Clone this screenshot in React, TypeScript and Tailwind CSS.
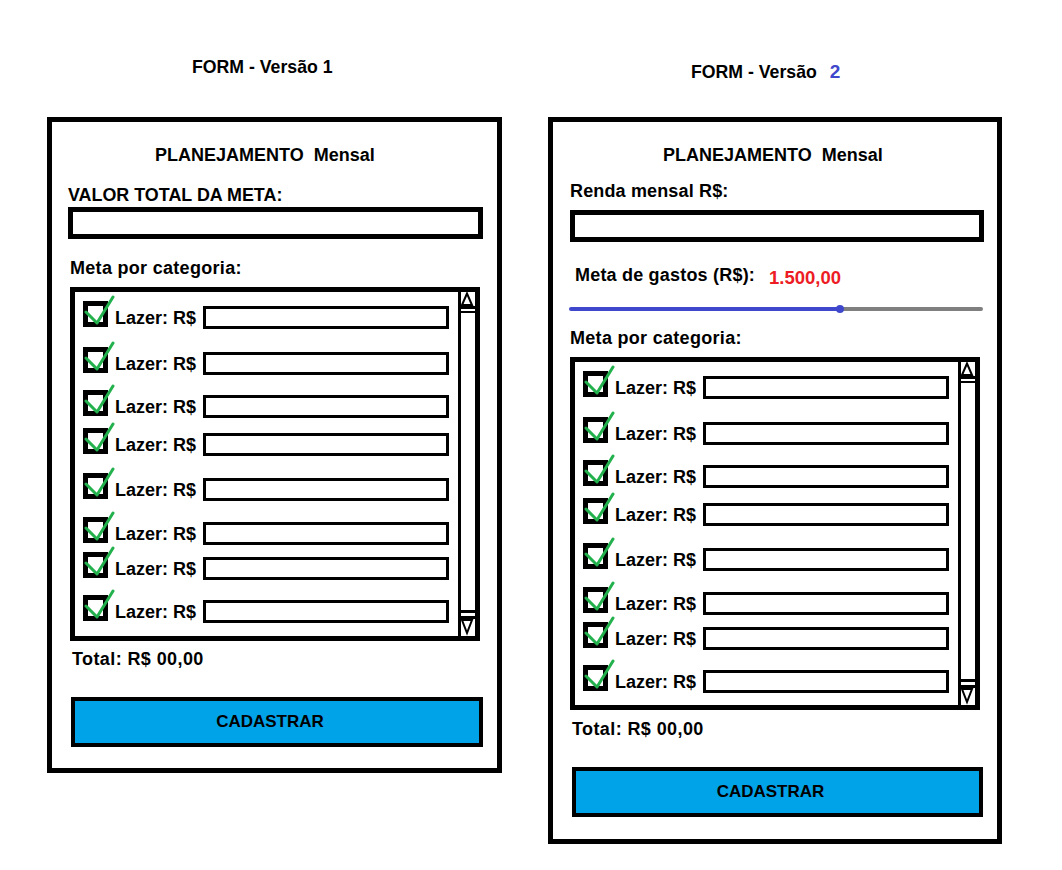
import React from "react";

const rowGaps = ["mt-[9px]", "mt-[18px]", "mt-[15px]", "mt-[10px]", "mt-[17px]", "mt-[16px]", "mt-[7px]", "mt-[15px]"];

const CheckRow = ({ gap }: { gap: string }) => (
  <div className={`flex items-start h-[28px] pl-[8px] ${gap}`}>
    <div className="relative w-[25px] h-[26px] border-[5px] border-black bg-white shrink-0">
      <svg className="absolute left-[-5px] top-[-11px]" width="34" height="32" viewBox="0 0 34 32" fill="none">
        <polyline points="3,17 14,28 30,2" stroke="#22b14c" strokeWidth="3" strokeLinejoin="round" strokeLinecap="round" />
      </svg>
    </div>
    <span className="ml-[7px] mt-[7px] text-[18px] leading-[20px] whitespace-nowrap">Lazer: R$</span>
    <div className="ml-[7px] mt-[5px] w-[246px] h-[23px] border-[3px] border-black bg-white shrink-0" />
  </div>
);

const ScrollBar = () => (
  <div className="w-[17px] border-l-[3px] border-black flex flex-col justify-between">
    <svg width="14" height="21" viewBox="0 0 14 21">
      <polygon points="6,1.5 1,13 11,13" fill="white" stroke="black" strokeWidth="2" />
      <rect x="0" y="14" width="14" height="3" fill="black" />
      <rect x="0" y="19" width="14" height="2" fill="black" />
    </svg>
    <svg width="14" height="26" viewBox="0 0 14 26">
      <rect x="0" y="0" width="14" height="3" fill="black" />
      <rect x="0" y="6" width="14" height="3" fill="black" />
      <polygon points="1,10 11,10 6,23" fill="white" stroke="black" strokeWidth="2" />
    </svg>
  </div>
);

const CategoryList = ({ height }: { height: string }) => (
  <div className={`w-[410px] ${height} border-[5px] border-black flex`}>
    <div className="flex-1 flex flex-col">
      {rowGaps.map((g, i) => (
        <CheckRow key={i} gap={g} />
      ))}
    </div>
    <ScrollBar />
  </div>
);

const CadastrarButton = ({ width }: { width: string }) => (
  <div className={`mt-[28px] ml-[19px] ${width} h-[50px] border-[4px] border-black bg-[#00a2e8] flex items-center justify-center pr-[14px]`}>
    <span className="text-[17px] leading-[20px]">CADASTRAR</span>
  </div>
);

export default function App() {
  return (
    <div className="min-h-screen bg-white text-black font-bold font-['Liberation_Sans',Arial,sans-serif]">
      <div className="flex items-start pl-[47px] pt-[57px] gap-[46px]">
        {/* Versão 1 */}
        <div className="flex flex-col w-[455px]">
          <div className="pl-[145px] text-[17.7px] leading-[20px] whitespace-nowrap">FORM - Versão 1</div>
          <div className="mt-[40px] border-[5px] border-black flex flex-col items-start pt-[23px] pb-[21px]">
            <div className="ml-[103px] text-[18px] leading-[20px] whitespace-pre">PLANEJAMENTO  Mensal</div>
            <div className="ml-[16px] mt-[20px] text-[17.9px] leading-[20px]">VALOR TOTAL DA META:</div>
            <div className="ml-[16px] mt-[2px] w-[415px] h-[32px] border-[5px] border-black" />
            <div className="ml-[18px] mt-[19px] text-[18px] leading-[20px] tracking-[0.3px]">Meta por categoria:</div>
            <div className="ml-[18px] mt-[9px]">
              <CategoryList height="h-[354px]" />
            </div>
            <div className="ml-[20px] mt-[8px] text-[18px] leading-[20px] tracking-[0.4px]">Total: R$ 00,00</div>
            <CadastrarButton width="w-[412px]" />
          </div>
        </div>

        {/* Versão 2 */}
        <div className="flex flex-col w-[454px] mt-[5px]">
          <div className="pl-[143px] text-[17.7px] leading-[20px] whitespace-nowrap">
            FORM - Versão<span className="ml-[13px] text-[19px] text-[#3f48cc]">2</span>
          </div>
          <div className="mt-[35px] border-[5px] border-black flex flex-col items-start pt-[23px] pb-[22px]">
            <div className="ml-[110px] text-[18px] leading-[20px] whitespace-pre">PLANEJAMENTO  Mensal</div>
            <div className="ml-[17px] mt-[16px] text-[18px] leading-[20px] tracking-[0.15px]">Renda mensal R$:</div>
            <div className="ml-[17px] mt-[9px] w-[414px] h-[32px] border-[5px] border-black" />
            <div className="ml-[22px] mt-[23px] flex items-start">
              <span className="text-[18px] leading-[20px] tracking-[0.2px]">Meta de gastos (R$):</span>
              <span className="ml-[14px] mt-[3px] text-[18.5px] leading-[20px] text-[#ed1c24]">1.500,00</span>
            </div>
            <div className="ml-[16px] mt-[16px] relative w-[414px] h-[10px] flex items-center">
              <div className="w-[271px] h-[4px] rounded-full bg-[#3f48cc]" />
              <div className="flex-1 h-[4px] rounded-full bg-[#7f7f7f]" />
              <div className="absolute left-[267px] top-[1px] w-[8px] h-[8px] rounded-full bg-[#3f48cc]" />
            </div>
            <div className="ml-[17px] mt-[14px] text-[18px] leading-[20px] tracking-[0.3px]">Meta por categoria:</div>
            <div className="ml-[17px] mt-[9px]">
              <CategoryList height="h-[353px]" />
            </div>
            <div className="ml-[19px] mt-[9px] text-[18px] leading-[20px] tracking-[0.4px]">Total: R$ 00,00</div>
            <CadastrarButton width="w-[411px]" />
          </div>
        </div>
      </div>
    </div>
  );
}
